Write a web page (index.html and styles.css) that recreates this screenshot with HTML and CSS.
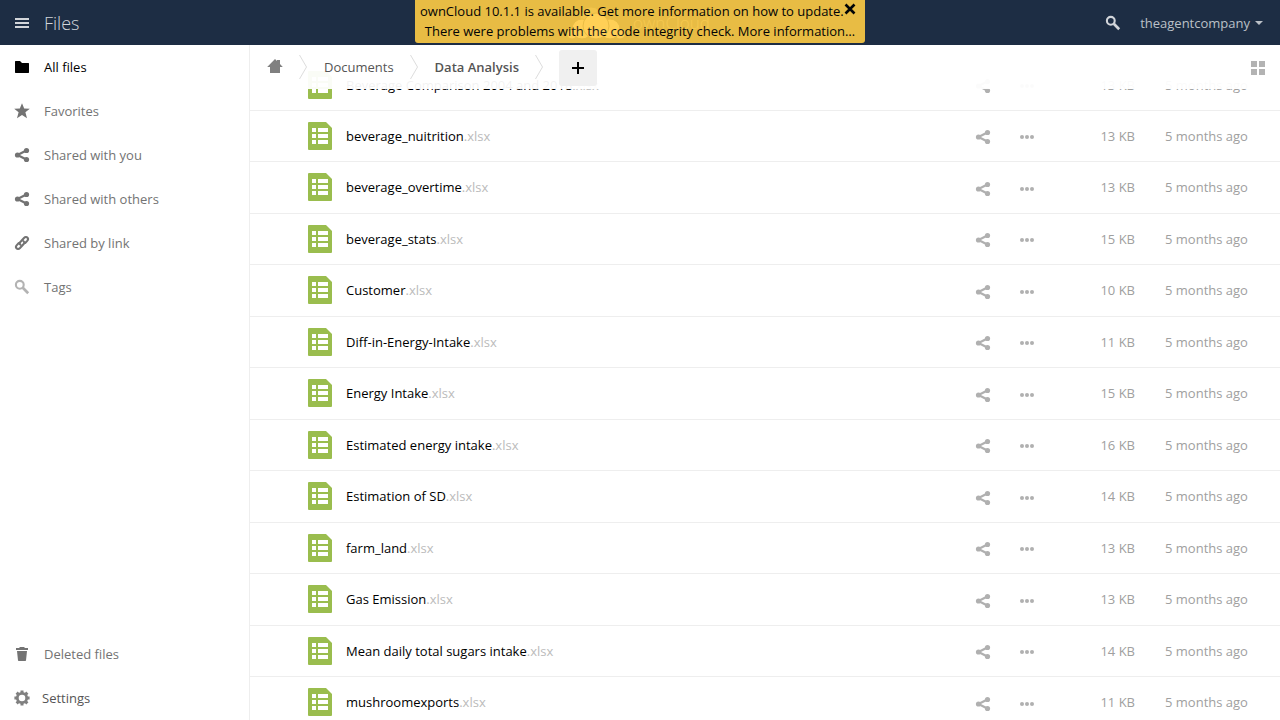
FILE: index.html
```html
<!DOCTYPE html>
<html lang="en">
<head>
<meta charset="utf-8">
<meta name="viewport" content="width=device-width, initial-scale=1">
<title>Files - ownCloud</title>
<link rel="stylesheet" href="styles.css">
</head>
<body>
<svg class="sprite" aria-hidden="true">
  <symbol id="share" viewBox="0 0 16 16"><path d="M3.500 8 12.400 3.500M3.500 8l8.900 4.500" fill="none" stroke="currentColor" stroke-width="2.200"/><circle cx="3.500" cy="8" r="2.600"/><circle cx="12.500" cy="3.500" r="2.600"/><circle cx="12.500" cy="12.500" r="2.600"/></symbol>
  <symbol id="more" viewBox="0 0 16 16"><circle cx="3" cy="8" r="2"/><circle cx="8" cy="8" r="2"/><circle cx="13" cy="8" r="2"/></symbol>
  <symbol id="search" viewBox="0 0 16 16"><circle cx="5.800" cy="5.800" r="3.900" fill="none" stroke="currentColor" stroke-width="2.100"/><path d="m8.800 8.800 5.400 5.400" fill="none" stroke="currentColor" stroke-width="2.700"/></symbol>
  <symbol id="sheet" viewBox="0 0 24 28"><path d="M1 0h17l6 6v21a1 1 0 0 1-1 1H1a1 1 0 0 1-1-1V1a1 1 0 0 1 1-1z" fill="#9abd4e"/><path d="M4 6h4v4H4zm6 0h10v4H10zM4 12h4v4H4zm6 0h10v4H10zM4 18h4v4H4zm6 0h10v4H10z" fill="#fff"/></symbol>
  <symbol id="crumb" viewBox="0 0 10 26"><path d="m1 1 7 12-7 12" fill="none" stroke="#ddd"/></symbol>
</svg>

<header class="header">
  <button class="menu-button" type="button" aria-label="Apps menu">
    <svg class="icon" viewBox="0 0 16 16"><path d="M1 3h14v2H1zm0 4h14v2H1zm0 4h14v2H1z"/></svg>
    <span class="app-name">Files</span>
  </button>
  <a class="logo" href="#">
    <svg class="cloud" viewBox="0 0 58 34" aria-hidden="true"><g stroke="#1d2d44"><circle cx="24" cy="12" r="11" opacity=".5"/><circle cx="5" cy="28" r="5"/><circle cx="53" cy="28" r="5"/><circle cx="15" cy="23" r="10"/><circle cx="43" cy="23" r="10"/><circle cx="29" cy="20" r="13"/></g></svg>
    <span>ownCloud</span>
  </a>
  <div class="header-right">
    <button class="search-button" type="button" aria-label="Search"><svg class="icon"><use href="#search"/></svg></button>
    <button class="user" type="button">theagentcompany<span class="caret"></span></button>
  </div>
</header>

<div class="notification" role="status">
  <div class="notice"><a href="#">ownCloud 10.1.1 is available. Get more information on how to update.</a></div>
  <div class="notice">There were problems with the code integrity check. <a href="#">More information…</a></div>
  <button class="dismiss" type="button" aria-label="Dismiss"><svg viewBox="0 0 12 12"><path d="m1.500 1.500 9 9m0-9-9 9" fill="none" stroke="#000" stroke-width="2.600"/></svg></button>
</div>

<div class="content">
  <nav class="sidebar" aria-label="Files navigation">
    <a class="nav-link active" href="#"><svg class="icon" viewBox="0 0 16 16"><path d="M1.500 2H6l1 1 1 1h6.500l.5.500v9l-.5.500h-13l-.5-.500v-11z"/></svg>All files</a>
    <a class="nav-link" href="#"><svg class="icon" viewBox="0 0 16 16"><path d="m8 .2 2.200 5.300 5.600.2-4.400 3.600 1.600 5.900L8 12 3 15.200l1.600-5.900L.2 5.700l5.600-.2z"/></svg>Favorites</a>
    <a class="nav-link" href="#"><svg class="icon"><use href="#share"/></svg>Shared with you</a>
    <a class="nav-link" href="#"><svg class="icon"><use href="#share"/></svg>Shared with others</a>
    <a class="nav-link" href="#"><svg class="icon" viewBox="0 0 16 16"><g fill="none" stroke="currentColor" stroke-width="2.100" stroke-linecap="round"><path d="M6.500 9.800C5 8.600 6 7.200 7 6.200L10 3c1.200-1.200 2.700-1.200 3.500-.300s.7 2.100-.3 3.200l-2 2.100"/><path d="M9.500 6.200c1.500 1.200.5 2.600-.5 3.600L6 13c-1.200 1.200-2.700 1.200-3.500.3s-.7-2.100.3-3.200l2-2.100"/></g></svg>Shared by link</a>
    <a class="nav-link" href="#"><svg class="icon pale"><use href="#search"/></svg>Tags</a>
    <a class="nav-link trash" href="#"><svg class="icon" viewBox="0 0 16 16"><path d="M6 1h4l1 1h3v2H2V2h3zM3 5h10l-1 9.500-.6.500H4.600L4 14.500z"/></svg>Deleted files</a>
    <button class="nav-link settings" type="button"><svg class="icon" viewBox="0 0 16 16"><g fill="none" stroke="currentColor"><circle cx="8" cy="8" r="4.700" stroke-width="2.800"/><path d="M8 .4v3M8 12.600v3M.4 8h3M12.600 8h3M2.630 2.630l2 2M11.370 11.370l2 2M2.630 13.370l2-2M11.370 4.630l2-2" stroke-width="3"/></g></svg>Settings</button>
  </nav>

  <main class="files">
    <div class="controls">
      <nav class="breadcrumb" aria-label="Breadcrumb">
        <a class="home" href="#" aria-label="Home"><svg class="icon" viewBox="0 0 16 16"><path d="M8 0 .2 8H3v6h10V8h2.800L13 5V1h-3v1z"/></svg></a>
        <svg class="separator"><use href="#crumb"/></svg>
        <a href="#">Documents</a>
        <svg class="separator"><use href="#crumb"/></svg>
        <a class="current" href="#">Data Analysis</a>
        <svg class="separator"><use href="#crumb"/></svg>
      </nav>
      <button class="new" type="button" aria-label="New"><svg class="icon" viewBox="0 0 16 16"><path d="M7 2h2v5h5v2H9v5H7V9H2V7h5z"/></svg></button>
      <button class="view" type="button" aria-label="Grid view"><svg class="icon" viewBox="0 0 16 16"><path d="M1 1h6v6H1zm8 0h6v6H9zM1 9h6v6H1zm8 0h6v6H9z"/></svg></button>
    </div>
    <table class="list">
      <tbody id="rows"></tbody>
    </table>
  </main>
</div>
<script src="files.js"></script>
</body>
</html>
```

FILE: styles.css
```css
* { box-sizing: border-box; }

body {
  margin: 0;
  height: 100vh;
  display: flex;
  flex-direction: column;
  overflow: hidden;
  background: #fff;
  color: #000;
  font: 13px/20px "Open Sans", "Noto Sans", sans-serif;
}

a { color: inherit; text-decoration: none; }

button {
  margin: 0;
  padding: 0;
  border: 0;
  background: none;
  color: inherit;
  font: inherit;
  cursor: pointer;
}

svg { display: block; fill: currentColor; }
.sprite { position: absolute; width: 0; height: 0; }
.icon { width: 16px; height: 16px; flex: none; }

.header {
  flex: none;
  height: 45px;
  display: grid;
  grid-template-columns: 1fr auto 1fr;
  align-items: center;
  padding: 0 17px 0 14px;
  background: #1d2d44;
  color: #fff;
}

.menu-button { justify-self: start; display: flex; align-items: center; gap: 14px; color: #d2d5da; }
.app-name { font-size: 18px; font-weight: 300; }

.logo { display: flex; align-items: center; gap: 8px; font-size: 17px; font-weight: 300; }
.logo span { opacity: .6; }
.cloud { width: 58px; height: 34px; }

.header-right { justify-self: end; display: flex; align-items: center; gap: 19px; color: #bbc0c7; }
.search-button { color: #d2d5da; }
.user { display: flex; align-items: center; gap: 5px; }
.caret { border: 4px solid transparent; border-top-color: currentColor; border-bottom: 0; }

.notification {
  position: absolute;
  top: 0;
  left: 50%;
  transform: translateX(-50%);
  width: 450px;
  padding: 1px 5px 2px;
  border-radius: 0 0 3px 3px;
  background: #fc4;
  opacity: .9;
  z-index: 2;
  white-space: nowrap;
}

.notice:nth-child(2) { text-align: center; }
.dismiss { position: absolute; top: 3px; right: 9px; }
.dismiss svg { width: 12px; height: 12px; }

.content { flex: 1; min-height: 0; display: flex; }

.sidebar {
  flex: none;
  width: 250px;
  display: flex;
  flex-direction: column;
  border-right: 1px solid #eee;
}

.nav-link {
  height: 44px;
  display: flex;
  align-items: center;
  gap: 14px;
  padding-left: 14px;
  color: #737373;
}
.nav-link.active { color: #000; }
.nav-link .pale { color: #b3b3b3; }
.trash { margin-top: auto; }
.settings { gap: 12px; color: #555; }
.settings .icon { color: #808080; }

.files { flex: 1; min-width: 0; overflow: hidden; }

.controls {
  position: relative;
  z-index: 1;
  height: 44px;
  margin-bottom: -29px;
  display: flex;
  align-items: center;
  padding: 0 14px 0 17px;
  background: rgba(255, 255, 255, .95);
  color: #555;
}

.breadcrumb { display: flex; align-items: center; gap: 15px; }
.home { color: #808080; }
.current { font-weight: 600; }
.separator { width: 11px; height: 26px; }

.new {
  width: 38px;
  height: 36px;
  display: grid;
  place-items: center;
  margin: 2px 0 0 14px;
  border-radius: 3px;
  background: #f0f0f0;
  color: #000;
}
.view { margin: 2px 0 0 auto; color: #b3b3b3; }

.list { width: 100%; border-collapse: collapse; table-layout: fixed; }
.list tr { height: 51px; }
.list tr:nth-child(odd) { height: 52px; }
.list tr:first-child { height: 50px; }
.list td { padding: 0; border-bottom: 1px solid #eee; color: #a0a0a0; }
.name a { display: flex; align-items: center; gap: 14px; padding-left: 58px; color: #000; }
.name svg { width: 24px; height: 28px; }
.extension { color: #bbb; }
.list .share, .list .actions { width: 44px; color: #b0b0b0; }
.list td button { display: block; padding-top: 3px; }
.list .size { width: 72px; text-align: right; }
.list .date { width: 145px; padding-left: 30px; }
```

FILE: files.js
```js
const files = [
  ["Beverage Comparison 2004 and 2018", 13],
  ["beverage_nuitrition", 13],
  ["beverage_overtime", 13],
  ["beverage_stats", 15],
  ["Customer", 10],
  ["Diff-in-Energy-Intake", 11],
  ["Energy Intake", 15],
  ["Estimated energy intake", 16],
  ["Estimation of SD", 14],
  ["farm_land", 13],
  ["Gas Emission", 13],
  ["Mean daily total sugars intake", 14],
  ["mushroomexports", 11]
];

document.getElementById("rows").innerHTML = files.map(([name, size]) => `
  <tr>
    <td class="name"><a href="#"><svg><use href="#sheet"/></svg><span>${name}<span class="extension">.xlsx</span></span></a></td>
    <td class="share"><button type="button" aria-label="Share ${name}"><svg class="icon"><use href="#share"/></svg></button></td>
    <td class="actions"><button type="button" aria-label="Actions for ${name}"><svg class="icon"><use href="#more"/></svg></button></td>
    <td class="size">${size} KB</td>
    <td class="date">5 months ago</td>
  </tr>`).join("");
```
